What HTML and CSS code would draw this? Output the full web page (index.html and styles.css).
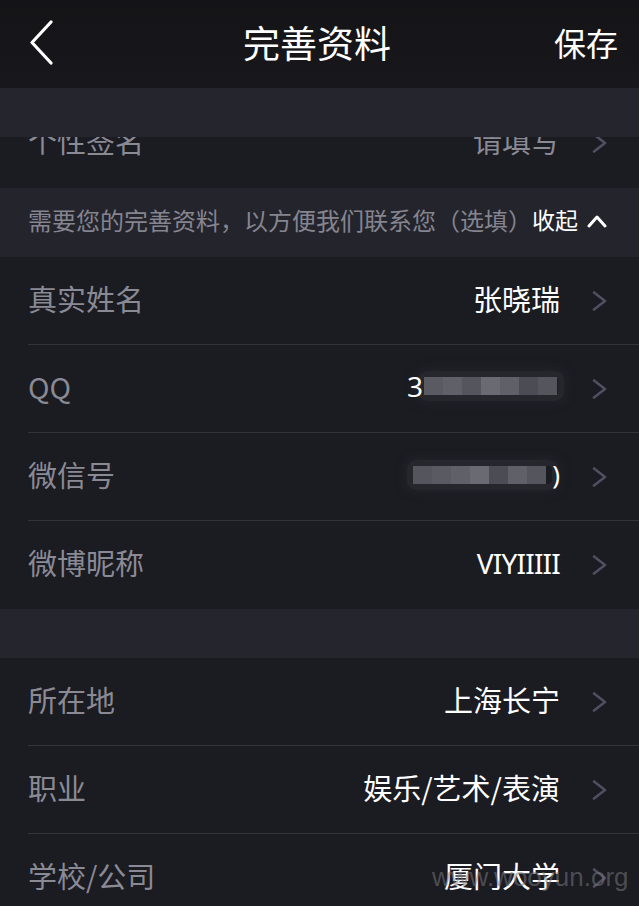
FILE: index.html
```html
<!DOCTYPE html>
<html lang="zh">
<head>
<meta charset="utf-8">
<link rel="stylesheet" href="styles.css">
</head>
<body>
<div class="screen">
  <header class="nav">
    <span class="back">
      <svg width="26" height="46" viewBox="0 0 26 46"><path d="M23 2 L4 22.5 L23 43" fill="none" stroke="#fff" stroke-width="3.2" stroke-linecap="round" stroke-linejoin="round"/></svg>
    </span>
    <h1 class="title">完善资料</h1>
    <span class="save">保存</span>
  </header>

  <div class="band"></div>

  <div class="clip">
    <div class="row shifted">
      <span class="label">个性签名</span>
      <span class="value dim">请填写</span>
      <span class="chev"><svg width="16" height="20" viewBox="0 0 16 20"><path d="M2 1.5 L13 10 L2 18.5" fill="none" stroke="#4f4f62" stroke-width="2.6" stroke-linecap="round" stroke-linejoin="round"/></svg></span>
    </div>
  </div>

  <div class="info">
    <span class="info-text">需要您的完善资料，以方便我们联系您（选填）</span>
    <span class="collapse">收起</span>
    <svg class="up" width="20" height="16" viewBox="0 0 20 16"><path d="M2 13 L10 4 L18 13" fill="none" stroke="#fff" stroke-width="3" stroke-linecap="round" stroke-linejoin="round"/></svg>
  </div>

  <section class="group">
    <div class="row">
      <span class="label">真实姓名</span>
      <span class="value">张晓瑞</span>
      <span class="chev"><svg width="16" height="20" viewBox="0 0 16 20"><path d="M2 1.5 L13 10 L2 18.5" fill="none" stroke="#4f4f62" stroke-width="2.6" stroke-linecap="round" stroke-linejoin="round"/></svg></span>
    </div>
    <div class="row">
      <span class="label">QQ</span>
      <span class="value mosaicwrap"><span class="lead">3</span><span class="mosaic qq"><i class="m1"></i><i class="m2"></i><i class="m3"></i><i class="m4"></i><i class="m2"></i><i class="m5"></i><i class="m3"></i></span></span>
      <span class="chev"><svg width="16" height="20" viewBox="0 0 16 20"><path d="M2 1.5 L13 10 L2 18.5" fill="none" stroke="#4f4f62" stroke-width="2.6" stroke-linecap="round" stroke-linejoin="round"/></svg></span>
    </div>
    <div class="row">
      <span class="label">微信号</span>
      <span class="value mosaicwrap"><span class="mosaic wx"><i class="m3"></i><i class="m1"></i><i class="m2"></i><i class="m4"></i><i class="m5"></i><i class="m2"></i><i class="m3"></i></span><span class="tail">)</span></span>
      <span class="chev"><svg width="16" height="20" viewBox="0 0 16 20"><path d="M2 1.5 L13 10 L2 18.5" fill="none" stroke="#4f4f62" stroke-width="2.6" stroke-linecap="round" stroke-linejoin="round"/></svg></span>
    </div>
    <div class="row">
      <span class="label">微博昵称</span>
      <span class="value latin">VIYIIIII</span>
      <span class="chev"><svg width="16" height="20" viewBox="0 0 16 20"><path d="M2 1.5 L13 10 L2 18.5" fill="none" stroke="#4f4f62" stroke-width="2.6" stroke-linecap="round" stroke-linejoin="round"/></svg></span>
    </div>
  </section>

  <div class="band"></div>

  <section class="group">
    <div class="row">
      <span class="label">所在地</span>
      <span class="value">上海长宁</span>
      <span class="chev"><svg width="16" height="20" viewBox="0 0 16 20"><path d="M2 1.5 L13 10 L2 18.5" fill="none" stroke="#4f4f62" stroke-width="2.6" stroke-linecap="round" stroke-linejoin="round"/></svg></span>
    </div>
    <div class="row">
      <span class="label">职业</span>
      <span class="value">娱乐/艺术/表演</span>
      <span class="chev"><svg width="16" height="20" viewBox="0 0 16 20"><path d="M2 1.5 L13 10 L2 18.5" fill="none" stroke="#4f4f62" stroke-width="2.6" stroke-linecap="round" stroke-linejoin="round"/></svg></span>
    </div>
    <div class="row">
      <span class="label">学校/公司</span>
      <span class="value">厦门大学</span>
      <span class="chev"><svg width="16" height="20" viewBox="0 0 16 20"><path d="M2 1.5 L13 10 L2 18.5" fill="none" stroke="#4f4f62" stroke-width="2.6" stroke-linecap="round" stroke-linejoin="round"/></svg></span>
    </div>
  </section>

  <div class="watermark">www.wooyun.org</div>
</div>
</body>
</html>
```

FILE: styles.css
```css
* { box-sizing: border-box; margin: 0; padding: 0; }
html, body { width: 639px; height: 906px; overflow: hidden; background: #1b1b22; }
body { font-family: "Noto Sans CJK SC", "Noto Sans", sans-serif; }

.screen { position: relative; width: 639px; height: 906px; overflow: hidden; background: #1b1b22; }

.nav {
  height: 88px;
  background: linear-gradient(#141417, #18181c);
  display: flex;
  align-items: center;
  padding: 0 21px 4px 28px;
}
.back { display: flex; width: 60px; margin-top: 2px; }
.title {
  flex: 1;
  text-align: center;
  color: #fff;
  font-size: 37px;
  font-weight: 400;
  line-height: 1;
  margin-left: -8px;
}
.save { color: #fff; font-size: 32px; line-height: 1; }

.band { height: 49px; background: #25252e; }

.clip { height: 51px; overflow: hidden; background: #1b1b22; }
.shifted { margin-top: -38px; }

.info {
  height: 69px;
  background: #24242c;
  display: flex;
  align-items: center;
  padding-left: 28px;
  padding-bottom: 6px;
}
.info-text { color: #858590; font-size: 24px; line-height: 1; }
.collapse { color: #fff; font-size: 23px; line-height: 1; margin-left: 0; }
.up { margin-left: 9px; margin-top: 3px; }

.group { background: #1b1b22; }
.row {
  height: 88px;
  display: flex;
  align-items: center;
  margin-left: 28px;
  border-bottom: 1px solid #33333c;
  padding-right: 31px;
  padding-bottom: 5px;
}
.group .row:last-child { border-bottom: none; }
.clip .row { border-bottom: none; }

.label { color: #8a8a95; font-size: 29px; line-height: 1; flex: 1; }
.value { color: #fff; font-size: 29px; line-height: 1; }
.value.dim { color: #8a8a95; }
.value.latin { font-family: "Noto Sans", sans-serif; font-size: 28px; letter-spacing: -0.8px; }
.chev { display: flex; margin-left: 32px; margin-top: 5px; }

.mosaicwrap { display: flex; align-items: center; font-family: "Noto Sans", sans-serif; font-size: 28px; }
.lead { position: relative; z-index: 1; margin-right: 1px; }
.tail { position: relative; z-index: 1; font-size: 26px; }
.mosaic {
  display: flex;
  height: 18px;
  border-radius: 4px;
  box-shadow: 0 0 0 6px #26262d, 0 0 8px 9px #22222a;
}
.mosaic i { display: block; width: 19px; height: 18px; }
.mosaic.qq { width: 134px; margin-right: 2px; }
.mosaic.wx { width: 139px; margin-top: 2px; }
.m1 { background: #5a5a62; }
.m2 { background: #606068; }
.m3 { background: #55555d; }
.m4 { background: #6a6a72; }
.m5 { background: #4c4c54; }

.watermark {
  position: absolute;
  left: 432px;
  top: 864px;
  color: rgba(120, 120, 125, 0.55);
  font-family: "Liberation Sans", sans-serif;
  font-size: 26px;
  line-height: 1;
}
```
